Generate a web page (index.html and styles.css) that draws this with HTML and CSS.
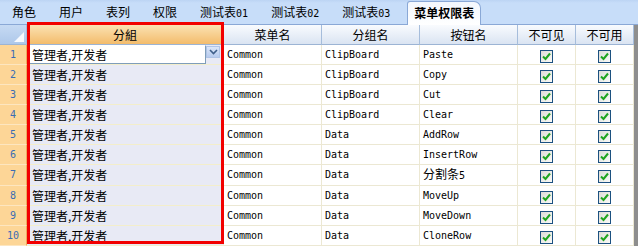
FILE: index.html
```html
<!DOCTYPE html>
<html lang="zh">
<head>
    <meta charset="UTF-8">
    <title>菜单权限表</title>
    <link rel="stylesheet" href="styles.css">
</head>
<body>
    <div class="window">
        <div class="tabs">
            <div class="tab">角色</div>
            <div class="tab">用户</div>
            <div class="tab">表列</div>
            <div class="tab">权限</div>
            <div class="tab">测试表<span class="num">01</span></div>
            <div class="tab">测试表<span class="num">02</span></div>
            <div class="tab">测试表<span class="num">03</span></div>
            <div class="tab active">菜单权限表</div>
        </div>

        <div class="gridWrap">
            <table class="grid">
                <colgroup>
                    <col style="width: 27px">
                    <col style="width: 197px">
                    <col style="width: 98px">
                    <col style="width: 98px">
                    <col style="width: 98px">
                    <col style="width: 58px">
                    <col style="width: 58px">
                </colgroup>
                <thead>
                    <tr>
                        <th class="corner"><span class="tri"></span></th>
                        <th class="sel">分組</th>
                        <th>菜单名</th>
                        <th>分组名</th>
                        <th>按钮名</th>
                        <th>不可见</th>
                        <th>不可用</th>
                    </tr>
                </thead>
                <tbody id="rows">
                    <!-- rijen via script -->
                </tbody>
            </table>
            <div class="mark"></div>
            <div class="scrollEdge"></div>
        </div>
    </div>

    <script>
        document.addEventListener("DOMContentLoaded", function() {
            const data = [
                ["Common", "ClipBoard", "Paste"],
                ["Common", "ClipBoard", "Copy"],
                ["Common", "ClipBoard", "Cut"],
                ["Common", "ClipBoard", "Clear"],
                ["Common", "Data", "AddRow"],
                ["Common", "Data", "InsertRow"],
                ["Common", "Data", "<span class='cjk'>分割条</span>5"],
                ["Common", "Data", "MoveUp"],
                ["Common", "Data", "MoveDown"],
                ["Common", "Data", "CloneRow"]
            ];
            const body = document.getElementById("rows");
            const check = `<span class="chk"><svg width="9" height="9" viewBox="0 0 9 9"><path d="M1 4.5 L3.5 7 L8 1.5" fill="none" stroke="#1fa51f" stroke-width="2"/></svg></span>`;

            data.forEach((r, i) => {
                let group = "管理者,开发者";
                if (i === 0) {
                    group = `<div class="editor"><div class="edit">管理者,开发者</div><div class="drop"><svg width="9" height="6" viewBox="0 0 9 6"><path d="M1 1 L4.5 4.5 L8 1" fill="none" stroke="#3f5f8a" stroke-width="1.6"/></svg></div></div>`;
                }
                const row = `<tr>
                    <td class="rowHead">${i + 1}</td>
                    <td class="group${i === 0 ? ' current' : ''}">${group}</td>
                    <td class="lat">${r[0]}</td>
                    <td class="lat">${r[1]}</td>
                    <td class="lat">${r[2]}</td>
                    <td class="box">${check}</td>
                    <td class="box">${check}</td>
                </tr>`;
                body.innerHTML += row;
            });
        });
    </script>
</body>
</html>
```

FILE: styles.css
```css
body {
    margin: 0;
    font-family: "Noto Sans CJK SC", sans-serif;
    font-size: 12px;
    color: #000;
    background: #fff;
}
.window {
    width: 638px;
    height: 246px;
    overflow: hidden;
}
.num, .lat {
    font-family: "DejaVu Sans Mono", monospace;
    font-size: 10px;
}
.cjk {
    font-family: "Noto Sans CJK SC", sans-serif;
    font-size: 12px;
}

/* tabbladen */
.tabs {
    display: flex;
    align-items: flex-end;
    height: 25px;
    box-sizing: border-box;
    background: linear-gradient(#bcd4f4, #c7ddf9 3px, #c7ddf9);
    border-bottom: 1px solid #8aa8d6;
}
.tab {
    height: 24px;
    line-height: 23px;
    padding: 0 11px 0 12px;
    white-space: nowrap;
}
.tab.active {
    margin-left: 6px;
    margin-bottom: -1px;
    height: 23px;
    line-height: 21px;
    padding: 0 6px;
    font-weight: bold;
    border: 1px solid #8aa8d6;
    border-bottom: none;
    border-radius: 3px 7px 0 0;
    background: linear-gradient(#f3f7fd, #ffffff);
}

/* raster */
.gridWrap {
    position: relative;
    height: 221px;
}
.grid {
    table-layout: fixed;
    width: 634px;
    border-collapse: separate;
    border-spacing: 0;
}
.grid tr {
    height: 20px;
}
.grid th, .grid td {
    box-sizing: border-box;
    height: 20px;
    line-height: 18px;
    padding: 0 3px;
    border-right: 1px solid #ece8d3;
    border-bottom: 1px solid #ece8d3;
    white-space: nowrap;
    overflow: hidden;
    text-align: left;
}
.grid th {
    font-weight: normal;
    text-align: center;
    background: linear-gradient(#f9fbfe, #dae4f2);
    border-right: 1px solid #a6bddb;
    border-bottom: 1px solid #9cb4d4;
}
.grid th.sel {
    background: linear-gradient(#fbe2b3, #f3bc6c);
    border-right-color: #e5a35a;
}
.grid th.corner {
    position: relative;
    background: linear-gradient(#c6daf3, #aec8ea);
}
.tri {
    position: absolute;
    right: 2px;
    bottom: 2px;
    width: 0;
    height: 0;
    border-left: 10px solid transparent;
    border-bottom: 10px solid #f7faff;
}
.grid td.rowHead {
    text-align: center;
    color: #3a6cb4;
    background: #fdd697;
    border-bottom: 1px solid #fde6c0;
    border-right: 1px solid #eeaa5c;
    font-family: "DejaVu Sans Mono", monospace;
    font-size: 10px;
}
.grid td.group {
    padding-left: 5px;
    background: #e8eaf5;
    border-bottom-color: #f3eecb;
}
.grid td.group.current {
    padding: 0 3px 0 1px;
    vertical-align: top;
}
.editor {
    display: flex;
    align-items: flex-start;
    height: 19px;
}
.edit {
    flex: 1;
    height: 19px;
    line-height: 17px;
    box-sizing: border-box;
    padding-left: 3px;
    background: #fff;
    border: 1px solid #7f9db9;
    border-top-color: #fff;
}
.drop {
    width: 14px;
    height: 12px;
    margin-top: 1px;
    display: flex;
    align-items: center;
    justify-content: center;
    background: linear-gradient(#dbe6f8, #b7cbee);
    border: 1px solid #b0c4e6;
    box-sizing: border-box;
}
.grid td.box {
    text-align: center;
    line-height: 0;
}
.chk {
    display: inline-flex;
    align-items: center;
    justify-content: center;
    width: 13px;
    height: 13px;
    margin-top: 3px;
    box-sizing: border-box;
    border: 1px solid #1c5180;
    background: linear-gradient(135deg, #dcdcd6, #fbfbf9);
}

/* markering en rand */
.mark {
    position: absolute;
    left: 27px;
    top: -3px;
    width: 197px;
    height: 222px;
    box-sizing: border-box;
    border: 3px solid #f20000;
}
.scrollEdge {
    position: absolute;
    right: 0;
    top: 0;
    width: 4px;
    height: 100%;
    background: #8e8e8e;
}
```
